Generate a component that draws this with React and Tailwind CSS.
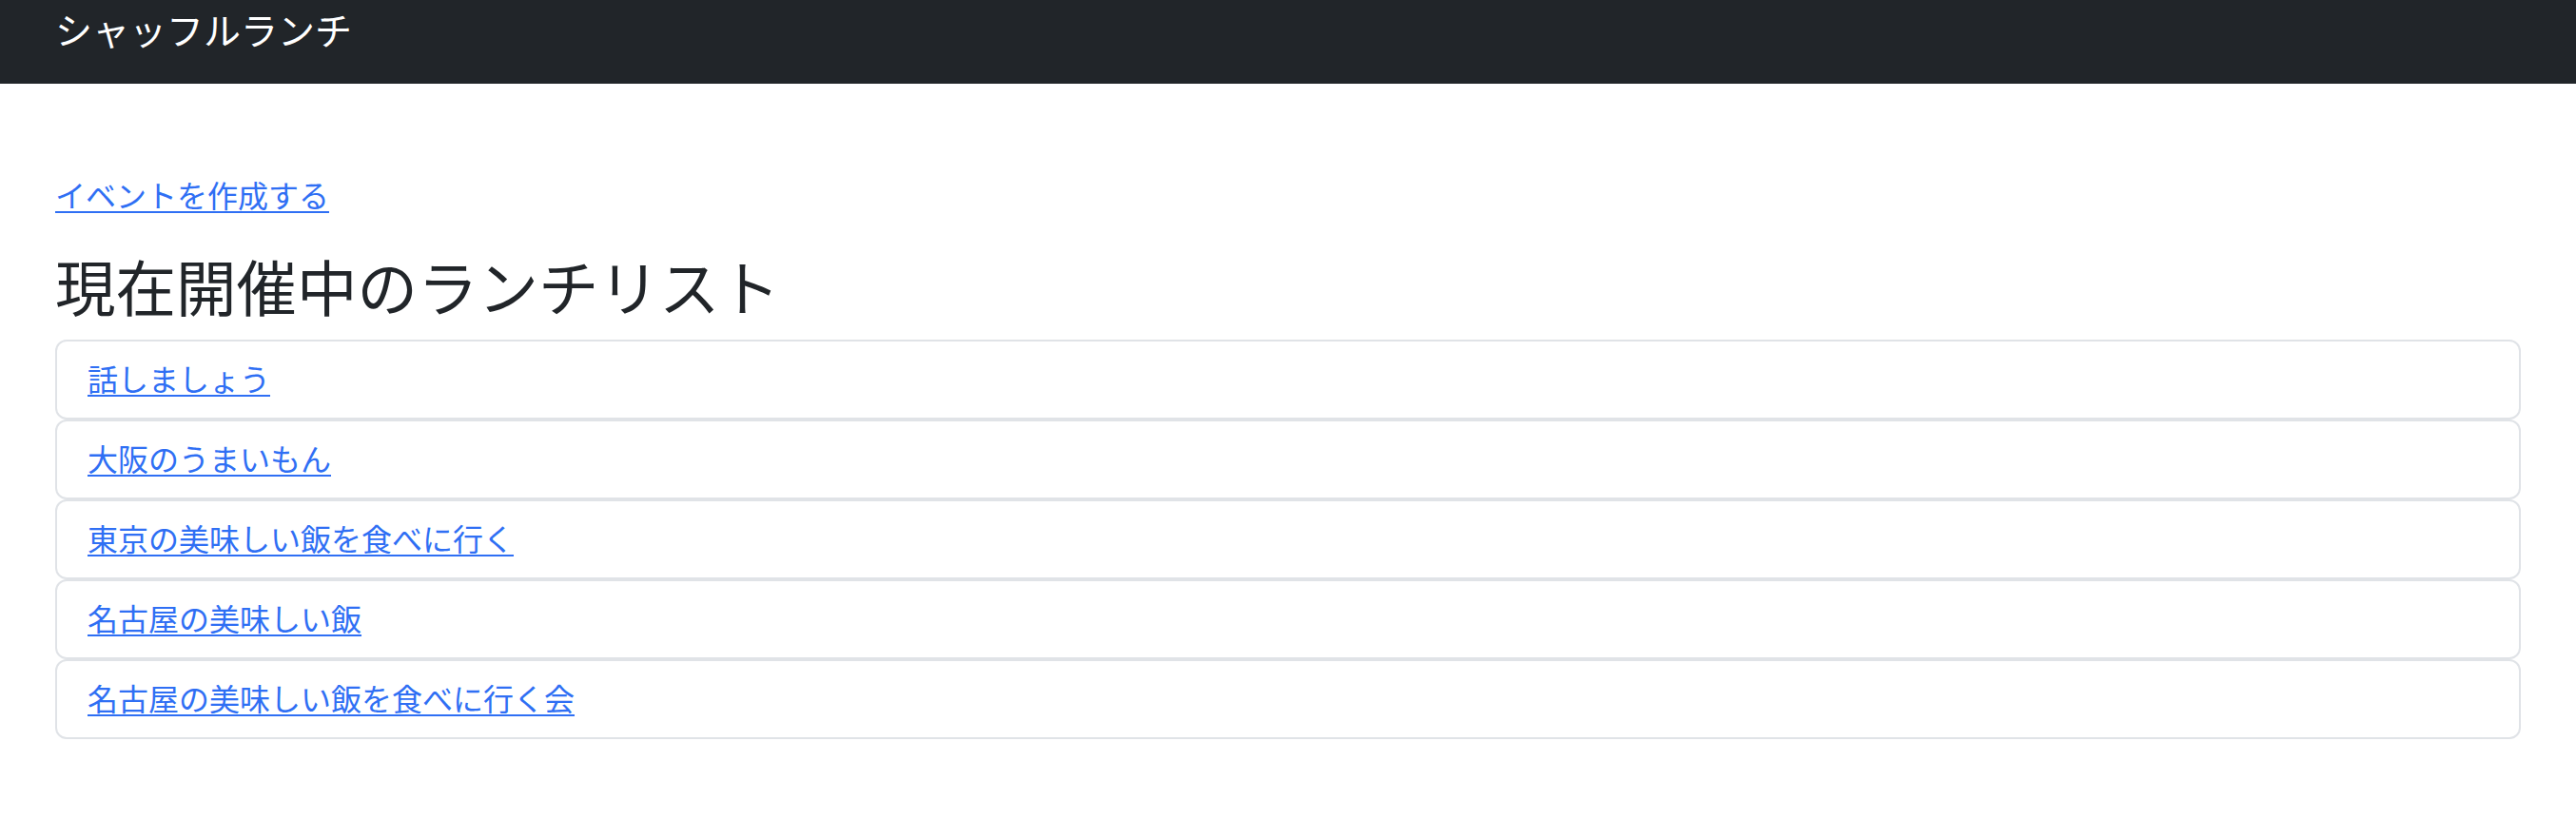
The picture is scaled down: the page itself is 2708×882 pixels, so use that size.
import React from "react";

const items = [
  "話しましょう",
  "大阪のうまいもん",
  "東京の美味しい飯を食べに行く",
  "名古屋の美味しい飯",
  "名古屋の美味しい飯を食べに行く会",
];

export default function App() {
  return (
    <div
      className="min-h-[882px] bg-white"
      style={{ fontFamily: '"Noto Sans CJK JP", "Noto Sans", sans-serif' }}
    >
      <header className="h-[88px] bg-[#212529] px-[58px]">
        <div className="text-[39px] leading-[60px] text-white">シャッフルランチ</div>
      </header>
      <main className="px-[58px] pt-[92px]">
        <p className="mb-[33px] text-[32px] leading-[48px]">
          <a href="#" className="text-[#2f6ff4] underline decoration-2 underline-offset-[4px]">
            イベントを作成する
          </a>
        </p>
        <h2 className="mb-[19px] text-[63.5px] leading-[77px] text-[#212529]">
          現在開催中のランチリスト
        </h2>
        <div className="flex flex-col">
          {items.map((t) => (
            <div
              key={t}
              className="rounded-[12px] border-2 border-[#e0e3e7] bg-white px-[32px] pt-[14px] pb-[18px]"
            >
              <a
                href="#"
                className="text-[32px] leading-[48px] text-[#2f6ff4] underline decoration-2 underline-offset-[4px]"
              >
                {t}
              </a>
            </div>
          ))}
        </div>
      </main>
    </div>
  );
}
